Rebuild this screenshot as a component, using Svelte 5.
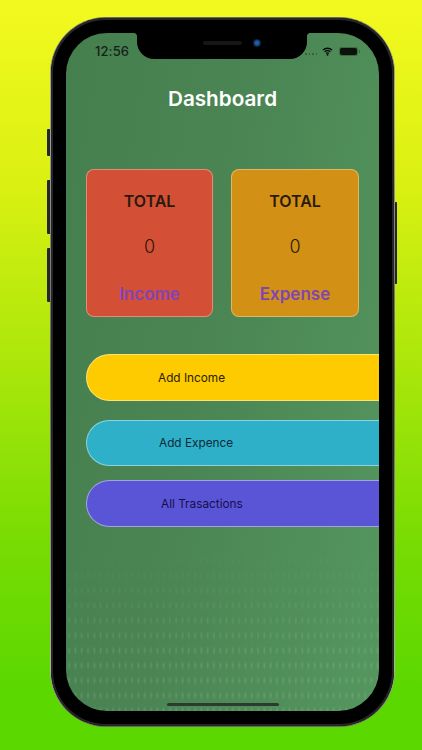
<script lang="ts">
	const cards = [
		{ label: 'Income', cls: 'income' },
		{ label: 'Expense', cls: 'expense' }
	];

	const actions = [
		{ label: 'Add Income', cls: 'yellow' },
		{ label: 'Add Expence', cls: 'teal' },
		{ label: 'All Trasactions', cls: 'indigo' }
	];
</script>

<div class="page">
	<div class="phone">
		<span class="side mute"></span>
		<span class="side vol-up"></span>
		<span class="side vol-down"></span>
		<span class="side power"></span>

		<div class="bezel">
			<div class="screen">
				<div class="dots"></div>

				<div class="notch">
					<span class="speaker"></span>
					<span class="camera"></span>
				</div>

				<div class="status">
					<span class="time">12:56</span>
					<div class="status-right">
						<span class="signal"><i></i><i></i><i></i><i></i></span>
						<svg width="11" height="9" viewBox="0 0 13 10.5" aria-hidden="true">
							<path d="M1 3.6a8 8 0 0 1 11 0M3 5.7a5.1 5.1 0 0 1 7 0M4.9 7.6a2.4 2.4 0 0 1 3.2 0" fill="none" stroke="#050a06" stroke-width="1.5" />
							<circle cx="6.5" cy="9.2" r="1.1" fill="#050a06" />
						</svg>
						<span class="battery"></span>
					</div>
				</div>

				<h1>Dashboard</h1>

				<div class="cards">
					{#each cards as card}
						<div class="card {card.cls}">
							<span class="total">TOTAL</span>
							<span class="amount">0</span>
							<span class="label">{card.label}</span>
						</div>
					{/each}
				</div>

				<div class="actions">
					{#each actions as action}
						<button class={action.cls}>{action.label}</button>
					{/each}
				</div>

				<div class="home"></div>
			</div>
		</div>
	</div>
</div>

<style>
	:global(body) {
		margin: 0;
		font-family: Inter, "Liberation Sans", sans-serif;
	}
	.page {
		width: 422px;
		height: 750px;
		padding: 17px 0 0 50px;
		box-sizing: border-box;
		overflow: hidden;
		background: linear-gradient(180deg, #f3f91e 0%, #d9f012 25%, #a8e60a 50%, #78dc03 72%, #5bd800 92%);
	}
	.phone {
		position: relative;
		width: 345px;
		height: 710px;
		box-sizing: border-box;
		padding: 1px;
		border-radius: 56px;
		background: linear-gradient(180deg, #6a6a64, #a8a8a3 10%, #666662 50%, #b0b0aa 92%, #6a6a64);
	}
	.side {
		position: absolute;
		left: -3px;
		width: 3px;
		background: #26262a;
		border-radius: 1px 0 0 1px;
	}
	.mute { top: 112px; height: 27px; }
	.vol-up { top: 163px; height: 54px; }
	.vol-down { top: 231px; height: 54px; }
	.power { left: auto; right: -2px; width: 2px; top: 185px; height: 82px; border-radius: 0 1px 1px 0; }
	.bezel {
		height: 100%;
		box-sizing: border-box;
		padding: 15px;
		border-radius: 55px;
		background: #000;
		box-shadow: inset 0 0 0 2px #262626;
	}
	.screen {
		position: relative;
		height: 100%;
		overflow: hidden;
		border-radius: 41px;
		background: linear-gradient(100deg, #467f4e 0%, #4a8553 45%, #55965f 100%);
	}
	.dots {
		position: absolute;
		inset: 505px 0 0 0;
		background-image: radial-gradient(ellipse 1.7px 5px at center, rgba(255, 255, 255, 0.13) 10%, transparent 100%);
		background-size: 6.3px 15px;
		-webkit-mask-image: linear-gradient(180deg, transparent 0%, #000 70%);
		mask-image: linear-gradient(180deg, transparent 0%, #000 70%);
	}
	.notch {
		position: absolute;
		top: 0;
		left: 71px;
		width: 170px;
		height: 26px;
		background: #000;
		border-radius: 0 0 17px 17px;
	}
	.notch::before,
	.notch::after {
		content: "";
		position: absolute;
		top: 0;
		width: 4px;
		height: 4px;
	}
	.notch::before {
		left: -4px;
		background: radial-gradient(circle at 0 100%, transparent 4px, #000 4.5px);
	}
	.notch::after {
		right: -4px;
		background: radial-gradient(circle at 100% 100%, transparent 4px, #000 4.5px);
	}
	.speaker {
		position: absolute;
		left: 66px;
		top: 8px;
		width: 39px;
		height: 4px;
		border-radius: 2px;
		background: #161616;
	}
	.camera {
		position: absolute;
		left: 116px;
		top: 6px;
		width: 8px;
		height: 8px;
		border-radius: 50%;
		background: radial-gradient(circle, #1c5fb0 25%, #0c1a30 70%);
	}
	.status {
		display: flex;
		justify-content: space-between;
		align-items: center;
		height: 36px;
		box-sizing: border-box;
		padding: 0 22px 0 29px;
	}
	.time {
		font-size: 13px;
		font-weight: 500;
		letter-spacing: 0.1px;
		color: #14231a;
	}
	.status-right {
		display: flex;
		align-items: center;
		gap: 5px;
	}
	.signal {
		display: flex;
		gap: 2px;
		margin-top: 6px;
	}
	.signal i {
		width: 1.5px;
		height: 1.5px;
		background: rgba(20, 40, 25, 0.4);
	}
	.battery {
		position: relative;
		width: 17px;
		height: 7px;
		margin-left: 2px;
		border-radius: 2px;
		background: #0b120c;
		box-shadow: 0 0 0 1px rgba(20, 40, 25, 0.35);
	}
	.battery::after {
		content: "";
		position: absolute;
		right: -3px;
		top: 2px;
		width: 1px;
		height: 3px;
		background: rgba(20, 40, 25, 0.4);
	}
	h1 {
		margin: 18px 0 0;
		text-align: center;
		font-size: 20.7px;
		line-height: 24px;
		font-weight: 600;
		color: #fff;
	}
	.cards {
		display: flex;
		gap: 18px;
		margin-top: 58px;
		padding-left: 20px;
	}
	.card {
		width: 127px;
		height: 148px;
		box-sizing: border-box;
		padding: 21px 0 11px;
		display: flex;
		flex-direction: column;
		align-items: center;
		justify-content: space-between;
		border: 1px solid rgba(255, 255, 255, 0.35);
		border-radius: 8px;
	}
	.expense { width: 128px; }
	.income { background: #d34f36; }
	.expense { background: #d29114; }
	.total {
		font-size: 16px;
		line-height: 20px;
		font-weight: 600;
		color: #2a1a0c;
	}
	.amount {
		font-size: 18px;
		line-height: 22px;
		font-weight: 300;
		color: #2a1a0c;
	}
	.label {
		font-size: 17px;
		line-height: 22px;
		font-weight: 600;
		color: #7f45b8;
	}
	.actions {
		display: flex;
		flex-direction: column;
		margin-top: 37px;
		margin-left: 20px;
	}
	button {
		width: 340px;
		height: 47px;
		box-sizing: border-box;
		border: 1px solid rgba(255, 255, 255, 0.45);
		border-radius: 24px;
		font: 400 11.8px Inter, "Liberation Sans", sans-serif;
		text-align: left;
		padding: 0 0 0 71px;
	}
	.yellow { background: #fdcb00; color: #2a2000; }
	.teal { background: #2eb0c8; height: 46px; margin-top: 19px; padding-left: 72px; color: #0c2a3a; }
	.indigo { background: #5a55d6; margin-top: 14px; padding-left: 74px; color: #14104a; }
	.home {
		position: absolute;
		left: 101px;
		bottom: 5px;
		width: 112px;
		height: 3px;
		border-radius: 2px;
		background: #2c3a30;
	}
</style>
